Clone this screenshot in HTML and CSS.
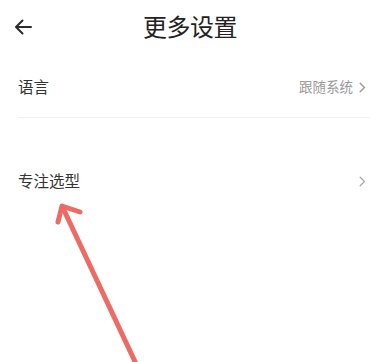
FILE: index.html
```html
<!DOCTYPE html>
<html lang="zh">
<head>
<meta charset="utf-8">
<link rel="stylesheet" href="styles.css">
</head>
<body>
<div class="page">
  <header class="header">
    <svg class="back" viewBox="0 0 18 16" width="18" height="16"><path d="M17 8H2M8.5 1.5L2 8l6.5 6.5" fill="none" stroke="#2b2b2b" stroke-width="2" stroke-linecap="round" stroke-linejoin="round"/></svg>
    <h1 class="title">更多设置</h1>
  </header>
  <div class="row row-bordered">
    <span class="label">语言</span>
    <span class="value">跟随系统<svg class="chev" viewBox="0 0 7 11" width="7" height="11"><path d="M1.2 1.2L5.5 5.5 1.2 9.8" fill="none" stroke="#9a9a9a" stroke-width="1.4" stroke-linecap="round" stroke-linejoin="round"/></svg></span>
  </div>
  <div class="row row-tall">
    <span class="label">专注选型</span>
    <svg class="chev chev-light" viewBox="0 0 7 11" width="7" height="11"><path d="M1.2 1.2L5.5 5.5 1.2 9.8" fill="none" stroke="#aaaaaa" stroke-width="1.3" stroke-linecap="round" stroke-linejoin="round"/></svg>
  </div>
  <svg class="annot" viewBox="0 0 370 362" width="370" height="362"><g fill="none" stroke="#ec6b65" stroke-width="5" stroke-linecap="round" stroke-linejoin="round"><path d="M62.5 207L138 368"/><path d="M58 222L62 206L80 212"/></g></svg>
</div>
</body>
</html>
```
FILE: styles.css
```css
html, body {
  margin: 0;
  padding: 0;
  background: #ffffff;
}
body {
  font-family: "Noto Sans CJK SC", "Noto Sans", sans-serif;
  color: #333333;
}
.page {
  position: relative;
  width: 370px;
  height: 362px;
  overflow: hidden;
}
.header {
  display: flex;
  align-items: center;
  height: 52px;
  padding-left: 14px;
}
.back {
  display: block;
  flex: none;
  margin-top: 1px;
}
.title {
  margin: 0 0 0 111px;
  font-size: 24px;
  font-weight: 400;
  line-height: 1;
  color: #222222;
  letter-spacing: -0.5px;
}
.row {
  display: flex;
  align-items: center;
  justify-content: space-between;
  margin-left: 18px;
  padding-right: 4px;
}
.row-bordered {
  height: 64px;
  margin-top: 2px;
  border-bottom: 1px solid #f0f0f0;
  box-sizing: border-box;
  padding-top: 3px;
}
.row-tall {
  height: 126px;
}
.label {
  font-size: 15.5px;
  line-height: 1;
  color: #333333;
}
.value {
  display: flex;
  align-items: center;
  gap: 6px;
  font-size: 13.5px;
  line-height: 1;
  color: #9a9a9a;
}
.chev {
  display: block;
}
.annot {
  position: absolute;
  left: 0;
  top: 0;
  pointer-events: none;
}
```
